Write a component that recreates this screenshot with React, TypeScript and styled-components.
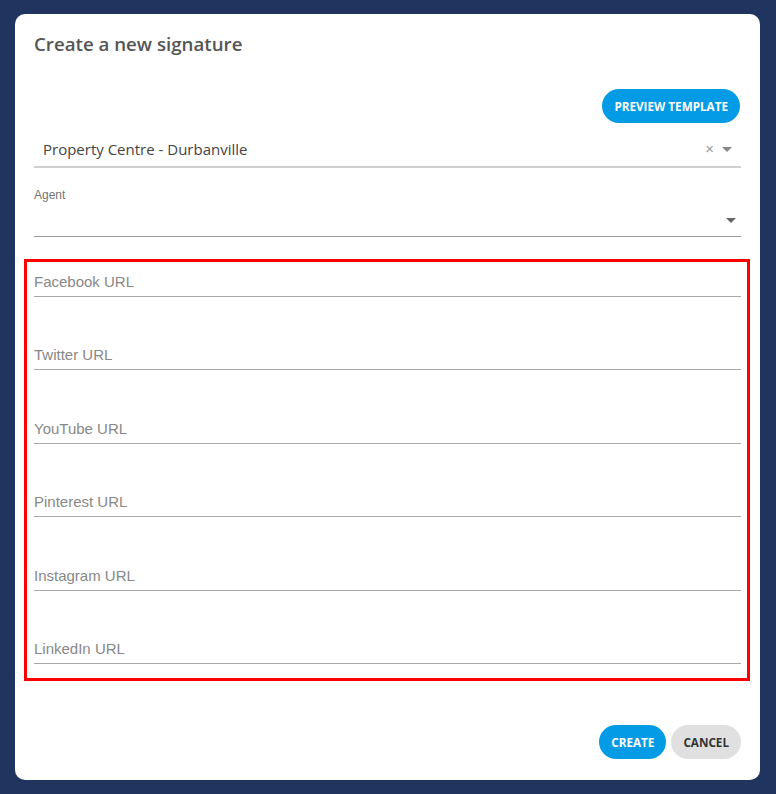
import React from "react";
import styled, { createGlobalStyle } from "styled-components";

const Global = createGlobalStyle`
  html, body { margin: 0; padding: 0; background: #1f3560; }
  body { font-family: "Open Sans", "Liberation Sans", sans-serif; }
  * { box-sizing: border-box; }
`;

const Page = styled.div`
  min-height: 794px;
  padding: 14px 16px 14px 15px;
  background: #1f3560;
`;

const Dialog = styled.div`
  width: 745px;
  height: 766px;
  background: #fff;
  border-radius: 10px;
  padding: 0 19px;
  display: flex;
  flex-direction: column;
`;

const Title = styled.h2`
  margin: 0;
  padding-top: 18px;
  font-family: "Open Sans", sans-serif;
  font-weight: 600;
  font-size: 18.7px;
  line-height: 24px;
  color: #555;
`;

const TopActions = styled.div`
  display: flex;
  justify-content: flex-end;
  margin-top: 33px;
  padding-right: 1px;
`;

const Pill = styled.button<{ $variant?: "primary" | "default" }>`
  height: 34px;
  border: none;
  border-radius: 17px;
  padding: 0 12px;
  font-family: "Open Sans", sans-serif;
  font-weight: 700;
  font-size: 11.7px;
  letter-spacing: 0;
  text-transform: uppercase;
  cursor: pointer;
  background: ${(p) => (p.$variant === "default" ? "#e0e0e0" : "#039be5")};
  color: ${(p) => (p.$variant === "default" ? "#333" : "#fff")};
`;

const SelectRow = styled.div`
  margin-top: 7px;
  height: 38px;
  display: flex;
  align-items: center;
  border-bottom: 2px solid #cfcfcf;
  padding: 0 9px;
`;

const SelectValue = styled.div`
  flex: 1;
  font-family: "Open Sans", sans-serif;
  font-size: 15px;
  color: #444;
  padding-top: 1px;
`;

const ClearX = styled.span`
  font-family: "Liberation Sans", sans-serif;
  font-size: 15px;
  color: #999;
  margin-right: 8px;
  line-height: 1;
  padding-top: 1px;
`;

const Caret = styled.span<{ $dark?: boolean }>`
  width: 0;
  height: 0;
  border-left: 5px solid transparent;
  border-right: 5px solid transparent;
  border-top: 5px solid ${(p) => (p.$dark ? "#666" : "#888")};
  margin-top: 2px;
`;

const AgentField = styled.div`
  margin-top: 20px;
  display: flex;
  flex-direction: column;
  border-bottom: 1px solid #999;
`;

const AgentLabel = styled.label`
  font-family: "Liberation Sans", Arial, sans-serif;
  font-size: 12px;
  color: #757575;
  line-height: 14px;
`;

const AgentControl = styled.div`
  height: 34px;
  display: flex;
  justify-content: flex-end;
  align-items: center;
  padding-right: 5px;
`;

const Highlight = styled.div`
  margin: 22px -9px 0 -10px;
  border: 3px solid #ff0000;
  padding: 1px 6px 14px 7px;
  display: flex;
  flex-direction: column;
  gap: 39.4px;
`;

const UrlField = styled.div`
  height: 34px;
  display: flex;
  align-items: flex-end;
  border-bottom: 1px solid #aaa;
  padding-bottom: 5px;
`;

const UrlLabel = styled.span`
  font-family: "Liberation Sans", Arial, sans-serif;
  font-size: 15px;
  color: #888;
  line-height: 18px;
`;

const Footer = styled.div`
  margin-top: auto;
  margin-bottom: 21px;
  display: flex;
  justify-content: flex-end;
  gap: 5px;
`;

const fields = [
  "Facebook URL",
  "Twitter URL",
  "YouTube URL",
  "Pinterest URL",
  "Instagram URL",
  "LinkedIn URL",
];

export default function App() {
  return (
    <>
      <Global />
      <Page>
        <Dialog>
          <Title>Create a new signature</Title>
          <TopActions>
            <Pill>Preview Template</Pill>
          </TopActions>
          <SelectRow>
            <SelectValue>Property Centre - Durbanville</SelectValue>
            <ClearX>×</ClearX>
            <Caret />
          </SelectRow>
          <AgentField>
            <AgentLabel>Agent</AgentLabel>
            <AgentControl>
              <Caret $dark />
            </AgentControl>
          </AgentField>
          <Highlight>
            {fields.map((f) => (
              <UrlField key={f}>
                <UrlLabel>{f}</UrlLabel>
              </UrlField>
            ))}
          </Highlight>
          <Footer>
            <Pill>Create</Pill>
            <Pill $variant="default">Cancel</Pill>
          </Footer>
        </Dialog>
      </Page>
    </>
  );
}
